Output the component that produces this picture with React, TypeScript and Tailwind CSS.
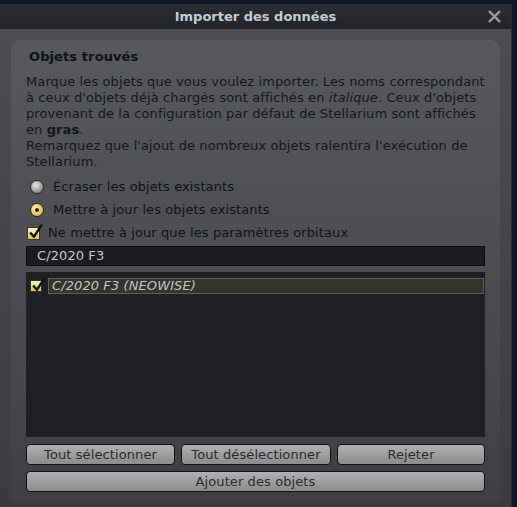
import React from 'react';

function Radio({ checked }: { checked?: boolean }) {
  return (
    <span
      className={
        'relative inline-block w-[14px] h-[14px] rounded-full border border-[#2a2a2a] ' +
        (checked
          ? 'bg-[radial-gradient(circle_at_40%_35%,#fff4c0,#e3c25c_60%,#a8862e)]'
          : 'bg-[radial-gradient(circle_at_40%_35%,#e8e8e8,#9a9a9a_60%,#5e5e5e)]')
      }
    >
      {checked && <span className="absolute left-[4px] top-[4px] w-[4px] h-[4px] rounded-full bg-[#222]" />}
    </span>
  );
}

function Check({ size = 13 }: { size?: number }) {
  return (
    <span
      className="relative inline-block shrink-0 border border-[#3a3520] bg-[linear-gradient(to_bottom,#fff6bf,#d9c46a)]"
      style={{ width: size, height: size }}
    >
      <svg viewBox="0 0 14 14" className="absolute left-[0px] top-[-4px] w-[15px] h-[16px] overflow-visible">
        <path d="M2 7.5 L5.5 11.5 L13 0" fill="none" stroke="#111" strokeWidth="2.2" strokeLinejoin="round" />
      </svg>
    </span>
  );
}

function Btn({ children, className = '' }: { children: React.ReactNode; className?: string }) {
  return (
    <button
      className={
        'h-[21px] rounded-[4px] border border-[#111] bg-[linear-gradient(to_bottom,#b0b0b0,#8c8c8c)] text-[13px] leading-[19px] text-[#2a2a2a] tracking-[0.1px] ' +
        className
      }
    >
      {children}
    </button>
  );
}

export default function App() {
  return (
    <div className="w-[517px] h-[507px] bg-[#11152a] pt-[4px] font-['DejaVu_Sans',sans-serif] overflow-hidden">
      <div className="w-[512px] h-[503px] flex flex-col border-r border-[#2a2c33]">
        {/* title bar */}
        <div className="relative h-[25px] shrink-0 bg-[linear-gradient(to_bottom,#2b2d31,#222427)] flex items-center justify-center">
          <span className="text-[13px] font-bold text-[#c6ccd3]">Importer des données</span>
          <svg viewBox="0 0 14 14" className="absolute right-[10px] top-[6px] w-[13px] h-[13px]">
            <path d="M2 2 L12 12 M12 2 L2 12" stroke="#9a9ca0" strokeWidth="2.6" strokeLinecap="square" />
          </svg>
        </div>

        {/* body */}
        <div className="flex-1 bg-[linear-gradient(to_bottom,#4b4d51,#3a3b3e)] px-[11px] pt-[11px]">
          <div className="h-[463px] rounded-[9px] bg-[linear-gradient(to_bottom,#57595d,#47484c_70%,#3e3f42)] px-[15px] pt-[8px] text-[#111] tracking-[0.1px]">
            <div className="text-[13px] font-bold pl-[3px] leading-[18px]">Objets trouvés</div>
            <div className="mt-[8px] text-[13px] leading-[16px] text-[#151515]">
              <div>Marque les objets que vous voulez importer. Les noms correspondant</div>
              <div>
                à ceux d'objets déjà chargés sont affichés en <i>italique</i>. Ceux d'objets
              </div>
              <div>provenant de la configuration par défaut de Stellarium sont affichés</div>
              <div>
                en <b>gras</b>.
              </div>
              <div>Remarquez que l'ajout de nombreux objets ralentira l'exécution de</div>
              <div>Stellarium.</div>
            </div>

            <div className="mt-[8px] flex items-center gap-[9px] pl-[4px] h-[18px] text-[13px]">
              <Radio />
              <span>Écraser les objets existants</span>
            </div>
            <div className="mt-[5px] flex items-center gap-[9px] pl-[4px] h-[18px] text-[13px]">
              <Radio checked />
              <span>Mettre à jour les objets existants</span>
            </div>
            <div className="mt-[5px] flex items-center gap-[8px] pl-[1px] h-[18px] text-[13px]">
              <Check />
              <span>Ne mettre à jour que les paramètres orbitaux</span>
            </div>

            <div className="mt-[4px] h-[20px] border border-[#0e0e0e] bg-[#1c1c1e] text-[13px] leading-[18px] text-[#c8c8c8] pl-[10px]">
              C/2020 F3
            </div>

            <div className="mt-[6px] h-[165px] bg-[#1f2023] pt-[6px] pl-[4px] pr-[1px]">
              <div className="flex items-center gap-[6px]">
                <Check size={12} />
                <div className="flex-1 h-[16px] border border-[#6a5f3f] bg-[#33332f] text-[13px] leading-[14px] italic text-[#c2c6cc] pl-[3px]">
                  C/2020 F3 (NEOWISE)
                </div>
              </div>
            </div>

            <div className="mt-[7px] flex gap-[6px]">
              <Btn className="w-[149px]">Tout sélectionner</Btn>
              <Btn className="w-[150px]">Tout désélectionner</Btn>
              <Btn className="flex-1">Rejeter</Btn>
            </div>
            <Btn className="mt-[6px] w-full">Ajouter des objets</Btn>
          </div>
        </div>
      </div>
    </div>
  );
}
